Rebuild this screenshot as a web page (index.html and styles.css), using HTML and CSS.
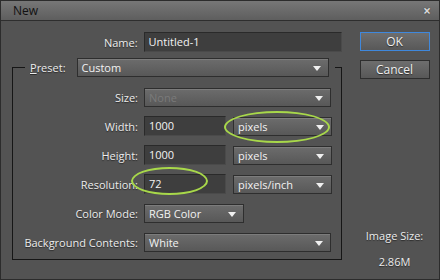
FILE: index.html
```html
<!DOCTYPE html>
<html lang="en">
<head>
    <meta charset="UTF-8">
    <title>New</title>
    <link rel="stylesheet" href="styles.css">
</head>
<body>
    <div class="window">
        <div class="titlebar">
            <span class="title">New</span>
            <span class="close">&#215;</span>
        </div>

        <div class="content">
            <div class="main">
                <div class="row name-row">
                    <label>Name:</label>
                    <div class="input name">Untitled-1</div>
                </div>

                <fieldset class="group">
                    <legend>
                        <label><u>P</u>reset:</label>
                        <div class="select preset">Custom</div>
                    </legend>

                    <div class="row">
                        <label>Size:</label>
                        <div class="select full disabled">None</div>
                    </div>
                    <div class="row">
                        <label>Width:</label>
                        <div class="input num">1000</div>
                        <div class="marked">
                            <div class="select unit">pixels</div>
                            <span class="ring ring-unit"></span>
                        </div>
                    </div>
                    <div class="row">
                        <label>Height:</label>
                        <div class="input num">1000</div>
                        <div class="select unit">pixels</div>
                    </div>
                    <div class="row">
                        <label>Resolution:</label>
                        <div class="marked">
                            <div class="input num">72</div>
                            <span class="ring ring-res"></span>
                        </div>
                        <div class="select unit">pixels/inch</div>
                    </div>
                    <div class="row">
                        <label>Color Mode:</label>
                        <div class="select mode">RGB Color</div>
                    </div>
                    <div class="row">
                        <label>Background Contents:</label>
                        <div class="select full">White</div>
                    </div>
                </fieldset>
            </div>

            <div class="side">
                <button class="btn default">OK</button>
                <button class="btn">Cancel</button>
                <div class="image-size">
                    <p>Image Size:</p>
                    <p class="size-value">2.86M</p>
                </div>
            </div>
        </div>
    </div>
</body>
</html>
```

FILE: styles.css
```css
* {
    margin: 0;
    padding: 0;
    box-sizing: border-box;
}

body {
    background-color: #535353;
    font-family: "Open Sans", "Noto Sans", sans-serif;
    font-size: 11px;
    color: #ececec;
}

.window {
    width: 440px;
    height: 280px;
    border: 1px solid #2c2c2c;
    background-color: #535353;
}

/* Title bar */
.titlebar {
    height: 20px;
    display: flex;
    justify-content: space-between;
    align-items: center;
    padding: 0 8px 0 12px;
    background: linear-gradient(#777777, #5e5e5e);
    border-bottom: 1px solid #2e2e2e;
}

.title {
    color: #111;
    font-size: 12px;
}

.close {
    color: #d8d8d8;
    font-size: 14px;
    font-weight: bold;
    text-shadow: 0 0 1px #222;
}

.content {
    display: flex;
    padding: 11px 0 0 11px;
}

.main {
    width: 330px;
}

/* Rows */
.row {
    display: flex;
    align-items: center;
    height: 20px;
    gap: 6px;
}

.row label {
    width: 125px;
    text-align: right;
    text-shadow: 0 1px 1px #2a2a2a;
}

.name-row label {
    width: 126px;
}

/* Controls */
.input {
    height: 20px;
    line-height: 18px;
    padding: 0 4px;
    background-color: #3e3e3e;
    border: 1px solid #2a2a2a;
    border-bottom-color: #4a4a4a;
    border-right-color: #4a4a4a;
    color: #f2f2f2;
}

.input.name {
    width: 199px;
}

.input.num {
    width: 82px;
}

.select {
    position: relative;
    height: 19px;
    line-height: 17px;
    padding: 0 4px;
    background: linear-gradient(#6c6c6c, #585858);
    border: 1px solid #2e2e2e;
    box-shadow: inset 0 1px 0 #7c7c7c;
    color: #f2f2f2;
}

.select::after {
    content: "";
    position: absolute;
    right: 7px;
    top: 7px;
    border-left: 4px solid transparent;
    border-right: 4px solid transparent;
    border-top: 5px solid #f0f0f0;
}

.select.full {
    width: 187px;
}

.select.unit {
    width: 99px;
}

.select.mode {
    width: 100px;
}

.select.disabled {
    color: #7a7a7a;
}

/* Preset group */
.group {
    margin-top: 6px;
    border: 1px solid #161616;
    padding: 10px 0 7px 0;
    display: flex;
    flex-direction: column;
    gap: 9px;
}

.group legend {
    display: flex;
    align-items: center;
    margin-left: 12px;
    padding: 0 6px 0 5px;
    gap: 11px;
}

.group legend label {
    text-shadow: 0 1px 1px #2a2a2a;
}

.select.preset {
    width: 252px;
}

.row .select.unit {
    margin-left: 1px;
}

/* Annotation rings */
.marked {
    position: relative;
}

.ring {
    position: absolute;
    border: 2px solid #a8d84a;
    border-radius: 50%;
}

.ring-unit {
    left: -8px;
    top: -6px;
    width: 106px;
    height: 32px;
}

.ring-res {
    left: -13px;
    top: -7px;
    width: 77px;
    height: 28px;
}

/* Right column */
.side {
    width: 98px;
    display: flex;
    flex-direction: column;
    align-items: center;
    padding-left: 8px;
}

.btn {
    width: 70px;
    height: 19px;
    font-family: inherit;
    font-size: 12px;
    color: #f0f0f0;
    background: linear-gradient(#6e6e6e, #585858);
    border: 1px solid #2e2e2e;
    text-shadow: 0 1px 1px #2a2a2a;
}

.btn.default {
    border-color: #3f88dc;
    margin-bottom: 9px;
}

.image-size {
    margin-top: 149px;
    text-align: center;
    text-shadow: 0 1px 1px #2a2a2a;
}

.size-value {
    margin-top: 11px;
}
```
